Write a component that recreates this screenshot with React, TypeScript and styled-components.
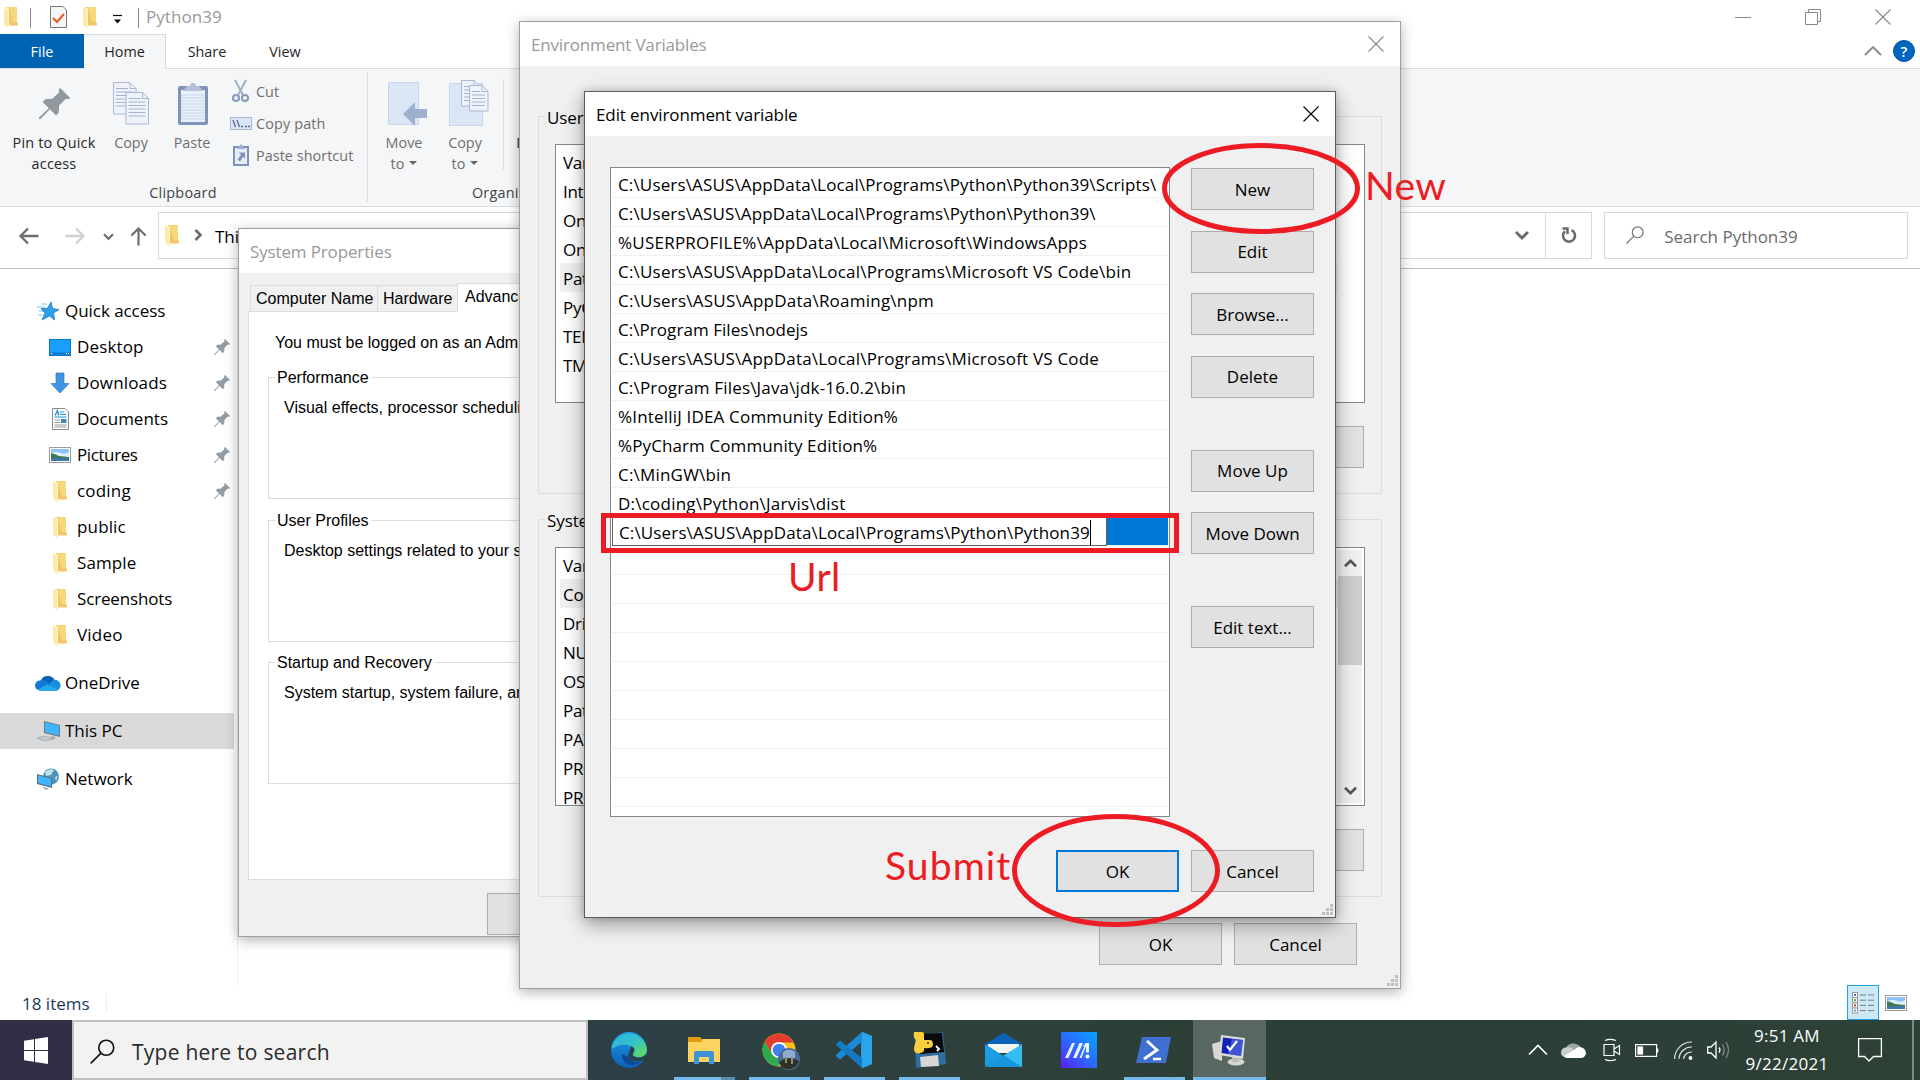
import React from "react";
import styled, { createGlobalStyle, css } from "styled-components";

const Global = createGlobalStyle`
  *, *::before, *::after { box-sizing: border-box; }
  html, body { margin: 0; padding: 0; background: #fff; overflow: hidden; }
  svg { display: block; flex: none; overflow: visible; }
`;

const UI = `"Open Sans", "Noto Sans", sans-serif`;
const CLASSIC = `"Liberation Sans", Arial, sans-serif`;

const Desktop = styled.div`
  position: relative;
  width: 1920px;
  height: 1080px;
  overflow: hidden;
  font: 17px/24px ${UI};
  color: #000;
  white-space: nowrap;
`;

const Txt = styled.span<{ $ls?: number; $size?: number }>`
  letter-spacing: ${(p) => p.$ls ?? 0}px;
  ${(p) => p.$size && css`font-size: ${p.$size}px;`}
`;

/* ---------- Explorer window ---------- */
const Explorer = styled.main`
  display: flex;
  flex-direction: column;
  height: 1020px;
  background: #fff;
`;
const TitleBar = styled.header`
  display: flex;
  height: 34px;
  align-items: center;
  padding: 0 29px 0 4px;
  color: #999;
`;
const TitleSep = styled.i<{ $ml: number; $mr: number }>`
  width: 1px;
  height: 20px;
  margin: 2px ${(p) => p.$mr}px 0 ${(p) => p.$ml}px;
  background: #8a8a8a;
`;
const Spacer = styled.div`
  flex: 1;
`;
const CaptionButtons = styled.div`
  display: flex;
  align-items: center;
  gap: 54px;
`;
const Tabs = styled.nav`
  display: flex;
  height: 35px;
  border-bottom: 1px solid #dadbdc;
  padding-right: 5px;
  align-items: center;
  font-size: 14.4px;
  color: #262626;
`;
const Tab = styled.div<{ $w: number; $kind?: "file" | "active" }>`
  width: ${(p) => p.$w}px;
  height: 34px;
  line-height: 35px;
  text-align: center;
  ${(p) => p.$kind === "file" && css`background: #0063b1; color: #fff;`}
  ${(p) =>
    p.$kind === "active" &&
    css`
      height: 35px;
      line-height: 33px;
      margin-bottom: -1px;
      background: #f5f6f7;
      border: 1px solid #dadbdc;
      border-bottom: 0;
      border-left: 0;
    `}
`;
const HelpBadge = styled.div`
  width: 22px;
  height: 22px;
  margin-left: 12px;
  border-radius: 50%;
  background: #0067c0;
  border: 1px solid #00509a;
  color: #fff;
  font: 600 15px/20px ${UI};
  text-align: center;
`;
const Ribbon = styled.section`
  display: flex;
  height: 138px;
  background: #f5f6f7;
  border-bottom: 1px solid #dadbdc;
  font-size: 14.4px;
  line-height: 21px;
  color: #6f6f6f;
`;
const RibbonGroup = styled.div<{ $w: number }>`
  display: flex;
  flex-direction: column;
  width: ${(p) => p.$w}px;
  margin: 3px 0 4px;
  border-right: 1px solid #dcdddf;
`;
const RibbonTools = styled.div`
  display: flex;
  height: 110px;
`;
const RibbonCaption = styled.div`
  height: 20px;
  padding-right: 1px;
  text-align: center;
  letter-spacing: 0.25px;
  color: #444;
`;
const BigTool = styled.div<{ $w: number; $dark?: boolean; $ls?: number }>`
  display: flex;
  flex-direction: column;
  align-items: center;
  width: ${(p) => p.$w}px;
  text-align: center;
  letter-spacing: ${(p) => p.$ls ?? 0}px;
  ${(p) => p.$dark && css`color: #262626;`}
`;
const BigIcon = styled.div<{ $dx?: number; $dy?: number }>`
  display: flex;
  align-items: center;
  justify-content: center;
  height: 60px;
  padding-top: ${(p) => 4 - 2 * (p.$dy ?? 0)}px;
  padding-left: ${(p) => 2 * (p.$dx ?? 0)}px;
`;
const SmallTools = styled.div`
  display: flex;
  flex-direction: column;
  padding-top: 3px;
`;
const SmallTool = styled.div`
  display: flex;
  align-items: center;
  gap: 5px;
  height: 32px;
`;
const IconSlot = styled.div<{ $w: number }>`
  display: flex;
  flex: none;
  justify-content: center;
  width: ${(p) => p.$w}px;
`;
const ToolSep = styled.i`
  width: 1px;
  height: 91px;
  margin: 7px 10px 0 13px;
  background: #dcdddf;
`;
const Caret = styled.i`
  display: inline-block;
  margin: 0 0 4px 5px;
  border: 4px solid transparent;
  border-top-color: #666;
  border-bottom: 0;
`;
const AddressRow = styled.section`
  display: flex;
  align-items: center;
  height: 62px;
  padding: 0 12px 5px 19px;
  border-bottom: 1px solid #bcbcbc;
`;
const NavArrows = styled.div`
  display: flex;
  align-items: center;
  width: 139px;
  padding-top: 2px;
`;
const Field = styled.div<{ $w: number }>`
  display: flex;
  align-items: center;
  width: ${(p) => p.$w}px;
  height: 47px;
  border: 1px solid #d9d9d9;
`;
const AddressField = styled(Field)`
  padding-left: 5px;
  gap: 12px;
  margin-right: 12px;
`;
const RefreshCell = styled.div`
  display: flex;
  align-items: center;
  justify-content: center;
  width: 46px;
  height: 100%;
  margin-left: 5px;
  border-left: 1px solid #d9d9d9;
`;
const FieldText = styled.span`
  padding-top: 3px;
`;
const SearchField = styled(Field)`
  padding-left: 21px;
  gap: 20px;
  color: #6b6b6b;
`;
const Body = styled.div`
  display: flex;
  flex: 1;
`;
const Sidebar = styled.aside`
  width: 238px;
  padding-top: 24px;
  border-right: 1px solid #f0f0f0;
`;
const NavItem = styled.div<{ $sub?: boolean; $active?: boolean; $gap?: boolean }>`
  display: flex;
  align-items: center;
  width: 234px;
  height: 36px;
  margin-top: ${(p) => (p.$gap ? 12 : 0)}px;
  padding: 0 4px 0 ${(p) => (p.$sub ? 45 : 35)}px;
  gap: ${(p) => (p.$sub ? 2 : 4)}px;
  background: ${(p) => (p.$active ? "#d9d9d9" : "transparent")};
`;
const StatusBar = styled.footer`
  display: flex;
  align-items: center;
  height: 35px;
  padding: 0 13px 0 22px;
  color: #1e395b;
`;
const StatusSep = styled.i`
  width: 1px;
  height: 18px;
  margin-left: 16px;
  background: #ececec;
`;
const ViewToggle = styled.div`
  display: flex;
  align-items: center;
  justify-content: center;
  width: 32px;
  height: 35px;
  margin-right: 6px;
  background: #cce8f6;
  border: 1px solid #26a0da;
`;

/* ---------- Dialogs ---------- */
const Dialog = styled.section<{ $x: number; $y: number; $w: number; $h: number; $front?: boolean }>`
  position: absolute;
  left: ${(p) => p.$x}px;
  top: ${(p) => p.$y}px;
  width: ${(p) => p.$w}px;
  height: ${(p) => p.$h}px;
  display: flex;
  flex-direction: column;
  background: #f0f0f0;
  border: 1px solid ${(p) => (p.$front ? "#5c5c5c" : "#a0a0a0")};
  box-shadow: ${(p) =>
    p.$front ? "0 6px 18px rgba(0,0,0,.38), 0 0 6px rgba(0,0,0,.15)" : "0 3px 12px rgba(0,0,0,.3)"};
`;
const DialogTitle = styled.header<{ $muted?: boolean }>`
  display: flex;
  flex: none;
  align-items: center;
  justify-content: space-between;
  height: 44px;
  padding: 0 16px 0 11px;
  background: #fff;
  color: ${(p) => (p.$muted ? "#999" : "#000")};
`;
const TitleText = styled.span<{ $ls: number }>`
  padding-top: 2px;
  letter-spacing: ${(p) => p.$ls}px;
`;
const Button = styled.button<{ $primary?: boolean }>`
  flex: none;
  width: 123px;
  height: 42px;
  padding: 1px 0 0;
  font: 17px/24px ${UI};
  color: #000;
  background: #e1e1e1;
  border: ${(p) => (p.$primary ? "2px solid #0078d7" : "1px solid #adadad")};
`;
const Grip = styled.div`
  display: grid;
  position: absolute;
  right: 2px;
  bottom: 2px;
  grid-template-columns: repeat(3, 3px);
  grid-auto-rows: 3px;
  gap: 1px;
`;
const GripDot = styled.i<{ $on: boolean }>`
  background: ${(p) => (p.$on ? "#bfbfbf" : "transparent")};
`;

/* System Properties */
const SysBody = styled.div`
  padding: 10px 9px 0;
  font: 16px/20px ${CLASSIC};
`;
const SysTabs = styled.div`
  display: flex;
  align-items: flex-end;
  height: 28px;
  padding-left: 2px;
`;
const SysTab = styled.div<{ $w: number; $active?: boolean }>`
  flex: none;
  width: ${(p) => p.$w}px;
  height: ${(p) => (p.$active ? 29 : 26)}px;
  padding-top: 3px;
  padding-left: ${(p) => (p.$active ? 7 : 5)}px;
  border: 1px solid #dcdcdc;
  border-right: 0;
  border-bottom: 0;
  background: ${(p) => (p.$active ? "#fff" : "#f0f0f0")};
  margin-bottom: ${(p) => (p.$active ? -1 : 0)}px;
`;
const SysPage = styled.div`
  height: 569px;
  width: 590px;
  padding: 21px 19px 0;
  border: 1px solid #dcdcdc;
  background: #fff;
`;
const SysNote = styled.p`
  margin: 0 0 24px 7px;
`;
const SysGroup = styled.div<{ $h: number; $mb: number }>`
  height: ${(p) => p.$h}px;
  margin-bottom: ${(p) => p.$mb}px;
  border: 1px solid #dcdcdc;
`;
const SysLegend = styled.div`
  width: fit-content;
  margin: -10px 0 0 6px;
  padding: 0 3px 0 2px;
  background: #fff;
`;
const SysText = styled.p`
  margin: 10px 0 0 15px;
`;
const SysFooter = styled.div`
  padding: 13px 0 0 239px;
`;

/* Environment Variables */
const EnvBody = styled.div`
  display: flex;
  flex: 1;
  flex-direction: column;
  padding: 50px 18px 0 18px;
`;
const EnvGroup = styled.div<{ $h: number; $mb: number }>`
  display: flex;
  flex-direction: column;
  height: ${(p) => p.$h}px;
  margin-bottom: ${(p) => p.$mb}px;
  padding: 0 17px 0 16px;
  border: 1px solid #dcdcdc;
`;
const EnvLegend = styled.div`
  width: fit-content;
  height: 24px;
  margin: -11px 0 14px -10px;
  padding: 0 2px;
  letter-spacing: -0.1px;
  background: #f0f0f0;
`;
const VarBox = styled.div`
  display: flex;
  height: 259px;
  padding: 2px 2px 2px 4px;
  margin: 0 -1px 23px 0;
  overflow: hidden;
  background: #fff;
  border: 1px solid #828790;
`;
const VarRows = styled.div<{ $inset?: number }>`
  flex: 1;
  margin-right: ${(p) => p.$inset ?? 0}px;
`;
const VarRow = styled.div<{ $sel?: boolean }>`
  height: 29px;
  padding-left: 3px;
  line-height: 32px;
  letter-spacing: -0.3px;
  background: ${(p) => (p.$sel ? "#f0f0f0" : "#fff")};
`;
const Scrollbar = styled.div`
  display: flex;
  flex-direction: column;
  align-items: center;
  width: 24px;
  background: #f0f0f0;
`;
const ScrollArrow = styled.div`
  display: flex;
  align-items: center;
  justify-content: center;
  height: 26px;
`;
const Thumb = styled.div`
  width: 24px;
  height: 89px;
  margin-bottom: auto;
  background: #cdcdcd;
`;
const EndRow = styled.div`
  display: flex;
  justify-content: flex-end;
  gap: 12px;
`;

/* Edit environment variable */
const EditBody = styled.div`
  display: flex;
  padding: 31px 21px 0 25px;
  justify-content: space-between;
`;
const PathList = styled.div`
  width: 560px;
  height: 650px;
  overflow: hidden;
  padding: 1px;
  background: #fff;
  border: 1px solid #828790;
`;
const PathRow = styled.div<{ $edit?: boolean }>`
  display: flex;
  height: 29px;
  padding-left: ${(p) => (p.$edit ? 0 : 6)}px;
  line-height: 31px;
  border-bottom: 1px solid #f0f0f0;
  background: ${(p) => (p.$edit ? "#0078d7" : "#fff")};
`;
const PathInput = styled.div`
  display: flex;
  align-items: center;
  width: 495px;
  height: 29px;
  padding: 1px 0 0 6px;
  background: #fff;
  border: 1px solid #646464;
`;
const TextCaret = styled.i`
  width: 1px;
  height: 25px;
  background: #000;
`;
const ButtonColumn = styled.div`
  display: flex;
  flex-direction: column;
  gap: 20.5px;
  padding-top: 1px;
`;
const ButtonGap = styled.i<{ $h: number }>`
  height: ${(p) => p.$h}px;
`;
const EditFooter = styled(EndRow)`
  padding: 33px 21px 0 0;
`;

/* ---------- Taskbar ---------- */
const Taskbar = styled.footer`
  display: flex;
  height: 60px;
  background: linear-gradient(90deg, #322c45 0, #322c45 72px, #2c3f46 588px, #2e413e 900px, #2c3f35 1200px, #2b3f38 1500px, #2d4136 1920px);
`;
const Start = styled.div`
  display: flex;
  align-items: center;
  justify-content: center;
  width: 72px;
`;
const TaskSearch = styled.div`
  display: flex;
  align-items: center;
  width: 516px;
  padding: 3px 0 0 16px;
  gap: 17px;
  color: #2b2b2b;
  background: #f2f2f2;
  border: 2px solid #bfbfbf;
`;
const Apps = styled.div`
  display: flex;
  padding-left: 5px;
`;
const AppButton = styled.div<{ $open?: boolean; $active?: boolean; $stack?: boolean }>`
  display: flex;
  flex-direction: column;
  align-items: center;
  justify-content: flex-end;
  width: 73px;
  margin-right: 2px;
  background: ${(p) => (p.$active ? "#586761" : "transparent")};
  &::after {
    content: "";
    width: ${(p) => (p.$active ? "73px" : "61px")};
    height: 3px;
    background: ${(p) =>
      p.$stack
        ? "linear-gradient(90deg,#76b9ed 47px,#5a8db0 47px)"
        : p.$open || p.$active
        ? "#76b9ed"
        : "transparent"};
  }
`;
const AppIcon = styled.div<{ $dx: number }>`
  display: flex;
  align-items: center;
  justify-content: center;
  height: 54px;
  padding-right: ${(p) => -2 * p.$dx}px;
`;
const Tray = styled.div`
  display: flex;
  align-items: center;
  margin-left: auto;
  width: 391px;
`;
const TrayIcon = styled.div<{ $ml: number }>`
  margin-left: ${(p) => p.$ml}px;
`;
const Clock = styled.div`
  width: 90px;
  margin-left: 11px;
  text-align: center;
  line-height: 28px;
  padding-bottom: 0;
  letter-spacing: 0.25px;
  color: #fff;
`;
const PeekLine = styled.i`
  width: 2px;
  height: 60px;
  margin-left: 30px;
  background: #7d8a84;
`;

/* ---------- Red markup drawn over the screen ---------- */
const Markup = styled.svg`
  position: absolute;
  inset: 0;
`;
const MarkLabel = styled.div<{ $x: number; $y: number; $ls?: number }>`
  position: absolute;
  left: ${(p) => p.$x}px;
  top: ${(p) => p.$y}px;
  font: 39px/48px Lato, "Open Sans", sans-serif;
  letter-spacing: ${(p) => p.$ls ?? 0}px;
  color: #ed1c24;
`;

/* ---------- Icons ---------- */
const Folder = () => (
  <svg width="14" height="21" viewBox="0 0 14 21">
    <path d="M2 0H13V15.5L14 16V18.5H5V2z" fill="#f0c869" />
    <path d="M5 0H13V15H9z" fill="#f7d97c" />
    <path d="M0 0L4.5 3V21L0 18z" fill="#ffe9a6" />
  </svg>
);
const PinShape = ({ s = 16, c = "#929ca4" }: { s?: number; c?: string }) => (
  <svg width={s} height={s} viewBox="0 0 30 30" fill={c}>
    <path d="M20.500 0L30 9.500L28.500 11L26 10.500L19.500 17L19 24L16.500 26.500L10.500 20.500L1.500 30L0 30V28.500L9.500 19.500L3.500 13.500L6 11L13 10.500L19.500 4L19 1.500z" />
  </svg>
);
const PageDoc = ({ x = 0, y = 0, w = 22, h = 31 }) => (
  <g transform={`translate(${x} ${y})`}>
    <path d={`M.5 .5H${w - 6}L${w} 6.500V${h}H.5z`} fill="#eef3fb" stroke="#a9b8d2" />
    <path d={`M${w - 6} .5V6.500H${w}`} fill="none" stroke="#a9b8d2" />
    {Array.from({ length: Math.floor((h - 8) / 3.5) }).map((_, i) => (
      <path key={i} d={`M3 ${6.5 + i * 3.5}H${i ? w - 3 : w - 8}`} stroke="#a3b3cf" />
    ))}
  </g>
);
const CopyBig = () => (
  <svg width="37" height="44" viewBox="0 0 37 44">
    <PageDoc w={23} h={32} />
    <PageDoc x={12.500} y={10} w={23} h={32} />
  </svg>
);
const PasteBig = () => (
  <svg width="30" height="44" viewBox="0 0 30 44">
    <rect x="0" y="4" width="30" height="39" rx="2" fill="#7f93b8" />
    <path d="M3 8H27V40H3z" fill="#eaf0fa" />
    {Array.from({ length: 9 }).map((_, i) => (
      <path key={i} d={`M3 ${13 + i * 3}H27`} stroke="#c9d6ea" />
    ))}
    <path d="M5 9L9 4H12A3 3 0 0 1 18 4H21L25 9z" fill="#b3c0d8" />
  </svg>
);
const Scissors = () => (
  <svg width="17" height="23" viewBox="0 0 17 23" fill="none">
    <path d="M3 0L11 15M14 0L6 15" stroke="#9fb0cc" strokeWidth="2" />
    <circle cx="4" cy="18" r="3" stroke="#8a9dc0" strokeWidth="2.200" />
    <circle cx="13" cy="18" r="3" stroke="#8a9dc0" strokeWidth="2.200" />
  </svg>
);
const CopyPath = () => (
  <svg width="22" height="13" viewBox="0 0 22 13">
    <rect x=".5" y=".5" width="21" height="12" fill="#dbe6f4" stroke="#a9b8d2" />
    <path d="M3 3L5.500 10M7 3L9.500 10M11 9.500H13M15 9.500H17M18 9.500H20" stroke="#55688f" strokeWidth="1.300" />
  </svg>
);
const PasteShortcut = () => (
  <svg width="16" height="22" viewBox="0 0 16 22">
    <rect x="1" y="3" width="14" height="18" fill="#e6edf8" stroke="#7f93b8" strokeWidth="2" />
    <path d="M4 5L8 0L12 5z" fill="#9fb0cc" />
    <path d="M6 8.500H12V14.500L10 12.700L7 17.500L4.500 15.500L8 10.700z" fill="#7f93b8" />
  </svg>
);
const MoveTo = () => (
  <svg width="39" height="44" viewBox="0 0 39 44">
    <rect x=".5" y=".5" width="30" height="42" fill="#dae5f5" stroke="#c8d6ec" />
    <path d="M15 32L27 20V27H39V36H27V44z" fill="#9fb0cf" />
  </svg>
);
const CopyTo = () => (
  <svg width="40" height="46" viewBox="0 0 40 46">
    <rect x=".5" y="3.500" width="33" height="42" fill="#dae5f5" stroke="#c8d6ec" />
    <PageDoc x={12} y={0} w={19} h={26} />
    <PageDoc x={20} y={5} w={19} h={26} />
  </svg>
);
const CloseX = ({ c = "#000" }) => (
  <svg width="16" height="16" viewBox="0 0 16 16" stroke={c} strokeWidth="1.100">
    <path d="M.5 .5L15.500 15.500M15.500 .5L.5 15.500" />
  </svg>
);
const Chevron = ({ dir, s = 10, c = "#6a6a6a", w = 2.4 }: { dir: "up" | "down" | "right"; s?: number; c?: string; w?: number }) => (
  <svg width={s} height={s} viewBox="0 0 10 10" fill="none" stroke={c} strokeWidth={w}>
    <path d={dir === "up" ? "M0 7.500L5 2.500L10 7.500" : dir === "down" ? "M0 2.500L5 7.500L10 2.500" : "M2.500 0L7.500 5L2.500 10"} />
  </svg>
);
const Arrow = ({ c = "#6d6d6d", rot = 0, s = 20 }) => (
  <svg width={s} height={s} viewBox="0 0 20 20" fill="none" stroke={c} strokeWidth="2.300">
    <path transform={`rotate(${rot} 10 10)`} d="M19.500 10H1.500M9 2.500L1.500 10L9 17.500" />
  </svg>
);
const Magnifier = ({ s = 18, c = "#777", w = 1.4 }) => (
  <svg width={s} height={s} viewBox="0 0 20 20" fill="none" stroke={c} strokeWidth={w}>
    <circle cx="13" cy="7" r="6" />
    <path d="M8.800 11.300L.5 19.500" />
  </svg>
);
const Refresh = () => (
  <svg width="16" height="17" viewBox="0 0 16 17" fill="none" stroke="#6a6a6a" strokeWidth="2.500">
    <path d="M10.500 3.200A6 6 0 1 1 4 4.200" />
    <path d="M1.500 1.500H6.500V7" />
  </svg>
);
const Star = () => (
  <svg width="22" height="19" viewBox="0 0 22 19">
    <path d="M0 5H8M2 9H8M1 13H6M4 2H10" stroke="#7cc4f0" />
    <path d="M14 0L15.500 6.500L22 7.500L16.500 11L17.500 18L12.500 14L5 18L8 11L4 6.500L10.500 6.300z" fill="#2d9fe8" stroke="#1a7cc4" strokeWidth=".8" />
  </svg>
);
const DesktopIcon = () => (
  <svg width="22" height="17" viewBox="0 0 22 17">
    <rect x=".5" y=".5" width="21" height="16" fill="#18a0fb" stroke="#0a76c4" />
    <path d="M1 14.500H21" stroke="#0a76c4" strokeWidth="2" />
    <path d="M17 14.500H18M19 14.500H20M2 14.500H3" stroke="#fff" />
  </svg>
);
const DownIcon = () => (
  <svg width="18" height="20" viewBox="0 0 18 20">
    <path d="M5 0H13V10.500H18L9 20L0 10.500H5z" fill="#3f95e2" stroke="#2a79c4" strokeWidth=".7" />
  </svg>
);
const DocIcon = () => (
  <svg width="17" height="22" viewBox="0 0 17 22">
    <path d="M.5 .5H13L16.500 4V21.500H.5z" fill="#fff" stroke="#8b8b8b" />
    <path d="M8 4H12M8 6.500H14M2.500 9H14.500" stroke="#1e90d8" />
    <path d="M3 7.500L5.500 2.500L6.500 7.500" fill="none" stroke="#1e90d8" strokeWidth="1.300" />
    <path d="M2.500 12H8M2.500 14.500H8M2.500 17H14.500M2.500 19H14.500" stroke="#9a9a9a" />
    <rect x="9" y="11" width="5.500" height="4" fill="#3f88b8" />
  </svg>
);
const PictureIcon = () => (
  <svg width="22" height="16" viewBox="0 0 22 16">
    <rect x=".5" y=".5" width="21" height="15" fill="#fff" stroke="#9b9b9b" />
    <rect x="2" y="2" width="18" height="12" fill="#8ec2fb" />
    <path d="M2 6Q8 4 12 6T20 5V11H2z" fill="#dff0fd" />
    <path d="M2 6Q6 7 10 9L20 10V11H2z" fill="#3f7a55" />
    <rect x="2" y="11" width="18" height="3" fill="#3f78a8" />
  </svg>
);
const CloudIcon = () => (
  <svg width="24" height="16" viewBox="0 0 24 16">
    <path d="M5 6A7 6 0 0 1 18 4L19 7L10 10z" fill="#0364b8" />
    <path d="M4 5.500A5 5 0 0 1 10 6L17 10L4 15.500A5 5 0 0 1 4 5.500z" fill="#0f78d4" />
    <path d="M17 5A5.500 5 0 0 1 20 15.800H5L14 9z" fill="#1490df" />
    <path d="M2 14.500L11 9.500L22 14.500Q21 16 19 16H5Q3 16 2 14.500z" fill="#28a8ea" />
  </svg>
);
const PcIcon = () => (
  <svg width="23" height="21" viewBox="0 0 23 21">
    <path d="M7 0L23 4V16L7 12z" fill="#6b7a86" />
    <path d="M8 1.300L22 4.800V14.500L8 11z" fill="#3fb4ff" />
    <path d="M0 17L8 15L15 18L8 20z" fill="#c4cbd1" stroke="#8b959d" strokeWidth=".6" />
    <path d="M13 15L19 16L16 19z" fill="#9aa5ae" />
  </svg>
);
const NetIcon = () => (
  <svg width="22" height="22" viewBox="0 0 22 22">
    <circle cx="14" cy="8.500" r="8" fill="#4d94b8" />
    <path d="M8 4Q12 0 17 2L14 7L9 8zM18 9L21 8L19 13z" fill="#bfe0ec" />
    <path d="M0 6L15 10V20L0 16z" fill="#5b6e7c" />
    <path d="M1 7.300L14 10.800V18.500L1 15z" fill="#3fb4ff" />
    <path d="M5 19L12 20.500L9 22z" fill="#9aa5ae" />
  </svg>
);
const DetailsIcon = () => (
  <svg width="22" height="22" viewBox="0 0 22 22" fill="none">
    {["#3a7bd0", "#6a9a3a", "#c04040", "#7a9ab0"].map((c, i) => (
      <g key={c}>
        <rect x=".5" y={0.5 + i * 5.2} width="5" height="5" fill="#fff" stroke="#9b9b9b" />
        <rect x="2" y={2 + i * 5.2} width="2" height="2" fill={c} />
        <path d={`M8 ${3 + i * 5.2}H14M16 ${3 + i * 5.2}H22`} stroke="#7d7d7d" />
      </g>
    ))}
  </svg>
);

const Edge = () => (
  <svg width="36" height="36" viewBox="0 0 36 36">
    <defs>
      <linearGradient id="eg" x1="0" y1="0" x2="1" y2="1">
        <stop offset="0" stopColor="#2fb4e8" /><stop offset=".5" stopColor="#35c1c9" /><stop offset="1" stopColor="#6ae04a" />
      </linearGradient>
      <linearGradient id="eb" x1="0" y1="0" x2="0" y2="1">
        <stop offset="0" stopColor="#1b9de2" /><stop offset="1" stopColor="#0c5fb8" />
      </linearGradient>
    </defs>
    <circle cx="18" cy="18" r="18" fill="url(#eb)" />
    <path d="M11 22C10 33 22 37 33 28C29 32 20 30 18 25z" fill="#0f4a94" />
    <path d="M1 14A18 18 0 0 1 36 17C36 23 31 26 26 25C21 24 22 22 23 20C23 14 16 11 9 13Q4 14.500 1 17z" fill="url(#eg)" />
    <path d="M23 16C25 20 20 21 22 24C26 27 31 26 34.500 23L37 24L36 30L32.500 28C24 31 18 28 17.500 23C17.500 19 20 18 20 14z" fill="#2d4040" />
  </svg>
);
const ExplorerIcon = () => (
  <svg width="33" height="27" viewBox="0 0 33 27">
    <path d="M0 0H12L15 3V6H0z" fill="#e39c0e" />
    <path d="M0 5H13L15 2H32V25H0z" fill="#fcd462" />
    <path d="M6 27V16Q6 14 8 14H24Q26 14 26 16V27H21V20H11V27z" fill="#3d93d8" />
  </svg>
);
const Chrome = () => (
  <svg width="36" height="34" viewBox="0 0 36 34">
    <circle cx="17" cy="17" r="16.500" fill="#fbc116" />
    <path d="M2.700 8.800A16.500 16.500 0 0 1 31.500 9.500H17L10 21z" fill="#e33b2e" />
    <path d="M2.700 8.800A16.500 16.500 0 0 0 16 33.500L23 22L10 21z" fill="#2da94f" />
    <circle cx="17" cy="17" r="8" fill="#fff" />
    <circle cx="17" cy="17" r="6.300" fill="#3f82ee" />
    <circle cx="27" cy="26" r="11" fill="#4b6b95" />
    <path d="M17 29Q27 22 37 28A11 11 0 0 1 20 34z" fill="#2c3226" />
    <path d="M21 19Q27 14 33 19V25H21z" fill="#91abcd" />
    <path d="M23 24H25V30H23zM29 24H31V31H29z" fill="#8d8f70" />
  </svg>
);
const VSCode = () => (
  <svg width="36" height="36" viewBox="0 0 36 36">
    <path d="M26 0L36 4V32L26 36L25 27V9z" fill="#2ba0ea" />
    <path d="M26 0L27 9L4 27.500L0 24V23z" fill="#1c8bd6" />
    <path d="M26 36L27 27L4 8.500L0 12V13z" fill="#127bc4" />
    <path d="M26 0L36 4V32L26 36z" fill="#2ba4ee" />
  </svg>
);
const Idle = () => (
  <svg width="35" height="36" viewBox="0 0 35 36">
    <path d="M3 4L31 0L34 32L4 36z" fill="#2f6da0" />
    <path d="M6 2L30 1L32 20L8 22z" fill="#0a0a0a" />
    <path d="M24 14L27 17L25 19" fill="none" stroke="#fff" strokeWidth="1.800" />
    <path d="M8 25L26 23L27 34L9 35z" fill="#d6d6d6" />
    <path d="M2 0H10Q12 0 12 2V8H18Q21 8 21 13Q20 17 12 16V19Q10 22 4 21Q2 20 2 16L4 8Q1 6 2 0z" fill="#fdcf3c" />
    <circle cx="16" cy="11" r="1" fill="#333" />
  </svg>
);
const Mail = () => (
  <svg width="37" height="34" viewBox="0 0 37 34">
    <path d="M0 11L18.500 0L37 11V16H0z" fill="#0b62b8" />
    <path d="M3 11H34V20H3z" fill="#f4f4f4" />
    <path d="M0 11L18.500 23L0 33.500z" fill="#1b9de2" />
    <path d="M37 11L0 34H37z" fill="#35bdf2" />
    <path d="M0 34L18.500 22L37 34z" fill="#1795dd" />
  </svg>
);
const MyAsus = () => (
  <svg width="36" height="36" viewBox="0 0 36 36">
    <defs>
      <linearGradient id="ma" x1="0" y1="1" x2="1" y2="0">
        <stop offset="0" stopColor="#5a1fff" /><stop offset=".5" stopColor="#2a6cff" /><stop offset="1" stopColor="#08a4ff" />
      </linearGradient>
    </defs>
    <rect width="36" height="36" fill="url(#ma)" />
    <path d="M4 26L11 11H14L7.500 26zM12 26L18.500 11H22L15.500 26zM22 14L25 11H28V20.500H25V15z" fill="#fff" opacity=".9" />
    <path d="M18.500 26L24.500 11.500H26L20.500 26z" fill="#fff" opacity=".9" />
    <circle cx="26.500" cy="24.500" r="2" fill="#fff" />
  </svg>
);
const PowerShell = () => (
  <svg width="36" height="27" viewBox="0 0 36 27">
    <path d="M6 0H35L30 26H0z" fill="#3f6fd0" />
    <path d="M11 4L21 13L8 22" fill="none" stroke="#fff" strokeWidth="2.800" />
    <path d="M17 22H25" stroke="#fff" strokeWidth="2.500" />
  </svg>
);
const SysIcon = () => (
  <svg width="34" height="31" viewBox="0 0 34 31">
    <path d="M0 9L10 6V26L2 23z" fill="#d9d9d0" />
    <ellipse cx="24" cy="27" rx="8.500" ry="3.500" fill="#d5d5d2" />
    <path d="M20 20H27V27H20z" fill="#bdbdb8" />
    <path d="M9 0L33 3L31 24L7 20z" fill="#dcdcd6" />
    <path d="M11 2.500L31 5L29 21L9.500 18z" fill="#1421b8" />
    <path d="M20 4L31 5L29 21L16 19z" fill="#5a78e6" opacity=".6" />
    <path d="M15 11L18 15L25 6" fill="none" stroke="#fff" strokeWidth="2.200" />
  </svg>
);

/* ---------- Data ---------- */
const quickItems: [string, React.ReactNode, boolean, number][] = [
  ["Desktop", <DesktopIcon />, true, 0.15],
  ["Downloads", <DownIcon />, true, 0.15],
  ["Documents", <DocIcon />, true, 0],
  ["Pictures", <PictureIcon />, true, -0.4],
  ["coding", <Folder />, true, 0.2],
  ["public", <Folder />, false, 0.15],
  ["Sample", <Folder />, false, 0.1],
  ["Screenshots", <Folder />, false, -0.15],
  ["Video", <Folder />, false, 0.2],
];
const userVars = ["Variable", "IntelliJ IDEA", "OneDrive", "OneDrive", "Path", "PyCharm", "TEMP", "TMP"];
const sysVars = ["Variable", "ComSpec", "DriverData", "NUMBER_OF", "OS", "Path", "PATHEXT", "PROCESSOR", "PROCESSOR"];
const paths: [string, number][] = [
  ["C:\\Users\\ASUS\\AppData\\Local\\Programs\\Python\\Python39\\Scripts\\", 0.15],
  ["C:\\Users\\ASUS\\AppData\\Local\\Programs\\Python\\Python39\\", 0.15],
  ["%USERPROFILE%\\AppData\\Local\\Microsoft\\WindowsApps", 0.24],
  ["C:\\Users\\ASUS\\AppData\\Local\\Programs\\Microsoft VS Code\\bin", 0.2],
  ["C:\\Users\\ASUS\\AppData\\Roaming\\npm", 0.23],
  ["C:\\Program Files\\nodejs", 0.05],
  ["C:\\Users\\ASUS\\AppData\\Local\\Programs\\Microsoft VS Code", 0.2],
  ["C:\\Program Files\\Java\\jdk-16.0.2\\bin", 0.16],
  ["%IntelliJ IDEA Community Edition%", 0.18],
  ["%PyCharm Community Edition%", 0.11],
  ["C:\\MinGW\\bin", 0.2],
  ["D:\\coding\\Python\\Jarvis\\dist", 0.23],
];
const apps: [React.ReactNode, string, number][] = [
  [<Edge />, "", -1],
  [<ExplorerIcon />, "stack", 0],
  [<Chrome />, "open", 0],
  [<VSCode />, "open", -1],
  [<Idle />, "open", 0],
  [<Mail />, "", -1],
  [<MyAsus />, "", -1],
  [<PowerShell />, "open", -1],
  [<SysIcon />, "active", -1],
];

const ResizeGrip = () => (
  <Grip>
    {[0, 0, 1, 0, 1, 1, 1, 1, 1].map((on, i) => (
      <GripDot key={i} $on={!!on} />
    ))}
  </Grip>
);

const ExplorerWindow = () => (
  <Explorer>
    <TitleBar>
      <Folder />
      <TitleSep $ml={12} $mr={19} />
      <svg width="17" height="22" viewBox="0 0 17 22">
        <path d="M.5 .5H13L16.500 4V21.500H.5z" fill="#f6f6f6" stroke="#777" />
        <path d="M3 12L7 16L14 8" fill="none" stroke="#e8591a" strokeWidth="2" />
      </svg>
      <IconSlot $w={46}><Folder /></IconSlot>
      <svg width="9" height="12" viewBox="0 0 9 12">
        <path d="M0 4.500H9" stroke="#000" strokeWidth="1.200" />
        <path d="M1 8.500H8L4.500 12.500z" />
      </svg>
      <TitleSep $ml={16} $mr={7} />
      <Txt $ls={0.05}>Python39</Txt>
      <Spacer />
      <CaptionButtons>
        <svg width="16" height="16"><path d="M0 8.500H16" stroke="#888" /></svg>
        <svg width="16" height="16" fill="none" stroke="#888"><path d="M.5 3.500H12.500V15.500H.5zM3.500 3.500V.5H15.500V12.500H12.500" /></svg>
        <CloseX c="#888" />
      </CaptionButtons>
    </TitleBar>
    <Tabs>
      <Tab $w={84} $kind="file">File</Tab>
      <Tab $w={82} $kind="active">Home</Tab>
      <Tab $w={82}>Share</Tab>
      <Tab $w={74}>View</Tab>
      <Spacer />
      <Chevron dir="up" s={16} c="#8a8a8a" w={1.200} />
      <HelpBadge>?</HelpBadge>
    </Tabs>
    <Ribbon>
      <RibbonGroup $w={368}>
        <RibbonTools>
          <BigTool $w={108} $dark $ls={0.2}>
            <BigIcon $dy={1}><PinShape s={31} c="#8f999f" /></BigIcon>
            Pin to Quick<br />access
          </BigTool>
          <BigTool $w={46}>
            <BigIcon><CopyBig /></BigIcon>Copy
          </BigTool>
          <BigTool $w={76}>
            <BigIcon $dx={1}><PasteBig /></BigIcon>Paste
          </BigTool>
          <SmallTools>
            <SmallTool><IconSlot $w={21}><Scissors /></IconSlot>Cut</SmallTool>
            <SmallTool><IconSlot $w={21}><CopyPath /></IconSlot><Txt $ls={0.15}>Copy path</Txt></SmallTool>
            <SmallTool><IconSlot $w={21}><PasteShortcut /></IconSlot><Txt $ls={0.05}>Paste shortcut</Txt></SmallTool>
          </SmallTools>
        </RibbonTools>
        <RibbonCaption>Clipboard</RibbonCaption>
      </RibbonGroup>
      <RibbonGroup $w={272}>
        <RibbonTools>
          <BigTool $w={72}>
            <BigIcon $dx={3}><MoveTo /></BigIcon>
            Move<span>to<Caret /></span>
          </BigTool>
          <BigTool $w={50}>
            <BigIcon $dx={4} $dy={1}><CopyTo /></BigIcon>
            Copy<span>to<Caret /></span>
          </BigTool>
          <ToolSep />
          <BigTool $w={48} $dark><BigIcon />Delete</BigTool>
        </RibbonTools>
        <RibbonCaption>Organize</RibbonCaption>
      </RibbonGroup>
    </Ribbon>
    <AddressRow>
      <NavArrows>
        <Arrow />
        <IconSlot $w={26} />
        <Arrow c="#d0d0d0" rot={180} />
        <IconSlot $w={47}><Chevron dir="down" s={9} /></IconSlot>
        <IconSlot $w={13}><Arrow rot={90} s={19} /></IconSlot>
      </NavArrows>
      <AddressField $w={1435}>
        <IconSlot $w={17}><Folder /></IconSlot>
        <Chevron dir="right" s={10} w={2.600} />
        <FieldText>This PC</FieldText>
        <Spacer />
        <Chevron dir="down" s={12} />
        <RefreshCell><Refresh /></RefreshCell>
      </AddressField>
      <SearchField $w={304}>
        <Magnifier />
        <FieldText>Search Python39</FieldText>
      </SearchField>
    </AddressRow>
    <Body>
      <Sidebar>
        <NavItem><IconSlot $w={26}><Star /></IconSlot><Txt $ls={-0.05}>Quick access</Txt></NavItem>
        {quickItems.map(([name, icon, pinned, ls]) => (
          <NavItem key={name} $sub>
            <IconSlot $w={30}>{icon}</IconSlot>
            <Txt $ls={ls}>{name}</Txt>
            <Spacer />
            {pinned && <PinShape />}
          </NavItem>
        ))}
        <NavItem $gap><IconSlot $w={26}><CloudIcon /></IconSlot>OneDrive</NavItem>
        <NavItem $gap $active><IconSlot $w={26}><PcIcon /></IconSlot>This PC</NavItem>
        <NavItem $gap><IconSlot $w={26}><NetIcon /></IconSlot>Network</NavItem>
      </Sidebar>
    </Body>
    <StatusBar>
      <FieldText>18 items</FieldText>
      <StatusSep />
      <Spacer />
      <ViewToggle><DetailsIcon /></ViewToggle>
      <PictureIcon />
    </StatusBar>
  </Explorer>
);

const SystemProperties = () => (
  <Dialog $x={238} $y={228} $w={610} $h={709}>
    <DialogTitle $muted><TitleText $ls={-0.14}>System Properties</TitleText></DialogTitle>
    <SysBody>
      <SysTabs>
        <SysTab $w={127}>Computer Name</SysTab>
        <SysTab $w={80}>Hardware</SysTab>
        <SysTab $w={90} $active>Advanced</SysTab>
      </SysTabs>
      <SysPage>
        <SysNote>You must be logged on as an Administrator</SysNote>
        <SysGroup $h={122} $mb={21}>
          <SysLegend>Performance</SysLegend>
          <SysText>Visual effects, processor scheduling</SysText>
        </SysGroup>
        <SysGroup $h={122} $mb={20}>
          <SysLegend>User Profiles</SysLegend>
          <SysText>Desktop settings related to your sign-in</SysText>
        </SysGroup>
        <SysGroup $h={122} $mb={0}>
          <SysLegend>Startup and Recovery</SysLegend>
          <SysText>System startup, system failure, and</SysText>
        </SysGroup>
      </SysPage>
      <SysFooter><Button /></SysFooter>
    </SysBody>
  </Dialog>
);

const EnvironmentVariables = () => (
  <Dialog $x={519} $y={21} $w={882} $h={968}>
    <DialogTitle $muted><TitleText $ls={-0.17}>Environment Variables</TitleText><CloseX c="#888" /></DialogTitle>
    <EnvBody>
      <EnvGroup $h={378} $mb={25}>
        <EnvLegend>User variables</EnvLegend>
        <VarBox>
          <VarRows $inset={25}>
            {userVars.map((v, i) => <VarRow key={i} $sel={i === 4}>{v}</VarRow>)}
          </VarRows>
        </VarBox>
        <EndRow><Button>Delete</Button></EndRow>
      </EnvGroup>
      <EnvGroup $h={378} $mb={26}>
        <EnvLegend>System variables</EnvLegend>
        <VarBox>
          <VarRows>
            {sysVars.map((v, i) => <VarRow key={i} $sel={i === 1}>{v}</VarRow>)}
          </VarRows>
          <Scrollbar>
            <ScrollArrow><Chevron dir="up" s={11} c="#555" /></ScrollArrow>
            <Thumb />
            <ScrollArrow><Chevron dir="down" s={11} c="#555" /></ScrollArrow>
          </Scrollbar>
        </VarBox>
        <EndRow><Button>Delete</Button></EndRow>
      </EnvGroup>
      <EndRow>
        <Button>OK</Button>
        <Button>Cancel</Button>
        <IconSlot $w={13} />
      </EndRow>
    </EnvBody>
    <ResizeGrip />
  </Dialog>
);

const EditVariable = () => (
  <Dialog $x={584} $y={91} $w={752} $h={827} $front>
    <DialogTitle><TitleText $ls={-0.1}>Edit environment variable</TitleText><CloseX /></DialogTitle>
    <EditBody>
      <PathList>
        {paths.map(([p, ls]) => <PathRow key={p}><Txt $ls={ls}>{p}</Txt></PathRow>)}
        <PathRow $edit>
          <PathInput>
            <Txt $ls={0.14}>C:\Users\ASUS\AppData\Local\Programs\Python\Python39</Txt>
            <TextCaret />
          </PathInput>
        </PathRow>
        {Array.from({ length: 9 }).map((_, i) => <PathRow key={i} />)}
      </PathList>
      <ButtonColumn>
        <Button>New</Button>
        <Button>Edit</Button>
        <Button>Browse...</Button>
        <Button>Delete</Button>
        <ButtonGap $h={11} />
        <Button>Move Up</Button>
        <Button>Move Down</Button>
        <ButtonGap $h={11} />
        <Button>Edit text...</Button>
      </ButtonColumn>
    </EditBody>
    <EditFooter>
      <Button $primary>OK</Button>
      <Button>Cancel</Button>
    </EditFooter>
    <ResizeGrip />
  </Dialog>
);

const TaskbarView = () => (
  <Taskbar>
    <Start>
      <svg width="24" height="27" viewBox="0 0 24 25" preserveAspectRatio="none" fill="#fff">
        <path d="M0 3.400L10 2V12H0zM11 1.800L24 0V12H11zM0 13H10V23L0 21.600zM11 13H24V25L11 23.200z" />
      </svg>
    </Start>
    <TaskSearch>
      <Magnifier s={25} c="#111" w={1.300} />
      <Txt $size={21} $ls={0.24}>Type here to search</Txt>
    </TaskSearch>
    <Apps>
      {apps.map(([icon, state, dx], i) => (
        <AppButton key={i} $stack={state === "stack"} $open={state === "open"} $active={state === "active"}>
          <AppIcon $dx={dx}>{icon}</AppIcon>
        </AppButton>
      ))}
    </Apps>
    <Tray>
      <Chevron dir="up" s={18} c="#fff" w={0.9} />
      <TrayIcon $ml={15}>
        <svg width="24" height="16" viewBox="0 0 24 16">
          <path d="M4 6A8 6.500 0 0 1 18 4L19 7L9 11z" fill="#9aa5a0" />
          <path d="M4 5.500Q8 4 11 7L17 10L4 15.500A5 5 0 0 1 4 5.500z" fill="#c9cecb" />
          <path d="M12 8Q16 3 21 6Q25 9 23.500 13Q22 16 19 16H5Q3 16 2 14z" fill="#fff" />
        </svg>
      </TrayIcon>
      <TrayIcon $ml={17}>
        <svg width="18" height="22" viewBox="0 0 18 22" fill="none" stroke="#fff" strokeWidth="1.200">
          <path d="M1 5.500H11V16.500H1zM11 10L16.500 6.500V15.500L11 12M2 1.500Q7 -.8 13 1.500M2 20.500Q7 22.800 13 20.500" />
        </svg>
      </TrayIcon>
      <TrayIcon $ml={14}>
        <svg width="24" height="13" viewBox="0 0 24 13" fill="none" stroke="#fff" strokeWidth="1.200">
          <rect x=".6" y=".6" width="21" height="11.800" />
          <rect x="3" y="3" width="4.500" height="7" fill="#fff" />
          <path d="M22.500 4.500V8.500" strokeWidth="1.600" />
        </svg>
      </TrayIcon>
      <TrayIcon $ml={15}>
        <svg width="19" height="19" viewBox="0 0 19 19" fill="none" stroke="#fff" strokeWidth="1.200">
          <path d="M.6 18A17 17 0 0 1 18 1M5 18A12.500 12.500 0 0 1 18 6M9.500 18A8 8 0 0 1 18 11" opacity=".85" />
          <circle cx="16.500" cy="17" r="1.300" fill="#fff" />
        </svg>
      </TrayIcon>
      <TrayIcon $ml={14}>
        <svg width="24" height="18" viewBox="0 0 24 18" fill="none" stroke="#fff" strokeWidth="1.300">
          <path d="M.7 6H4L9 1V17L4 12H.7z" />
          <path d="M12 6.500Q14 9 12 11.500" />
          <path d="M15.500 3.500Q19 9 15.500 14.500M19 1Q24 9 19 17" stroke="#7f8d86" />
        </svg>
      </TrayIcon>
      <Clock>9:51 AM<br />9/22/2021</Clock>
      <TrayIcon $ml={26}>
        <svg width="24" height="24" viewBox="0 0 24 24" fill="none" stroke="#fff" strokeWidth="1.300">
          <path d="M.6 .6H23.400V18.500H15.500L11 23L6.500 18.500H.6z" />
        </svg>
      </TrayIcon>
      <PeekLine />
    </Tray>
  </Taskbar>
);

export default function App() {
  return (
    <Desktop>
      <Global />
      <ExplorerWindow />
      <SystemProperties />
      <EnvironmentVariables />
      <EditVariable />
      <TaskbarView />
      <Markup width="1920" height="1080" fill="none" stroke="#ed1c24" strokeWidth="5">
        <ellipse cx="1261" cy="188.500" rx="96.500" ry="43" />
        <ellipse cx="1116" cy="870.500" rx="101.500" ry="54" />
        <rect x="603.500" y="515.500" width="573" height="35" />
      </Markup>
      <MarkLabel $x={1365} $y={161} $ls={0.3}>New</MarkLabel>
      <MarkLabel $x={788} $y={552} $ls={0.4}>Url</MarkLabel>
      <MarkLabel $x={885} $y={841} $ls={1.1}>Submit</MarkLabel>
    </Desktop>
  );
}
